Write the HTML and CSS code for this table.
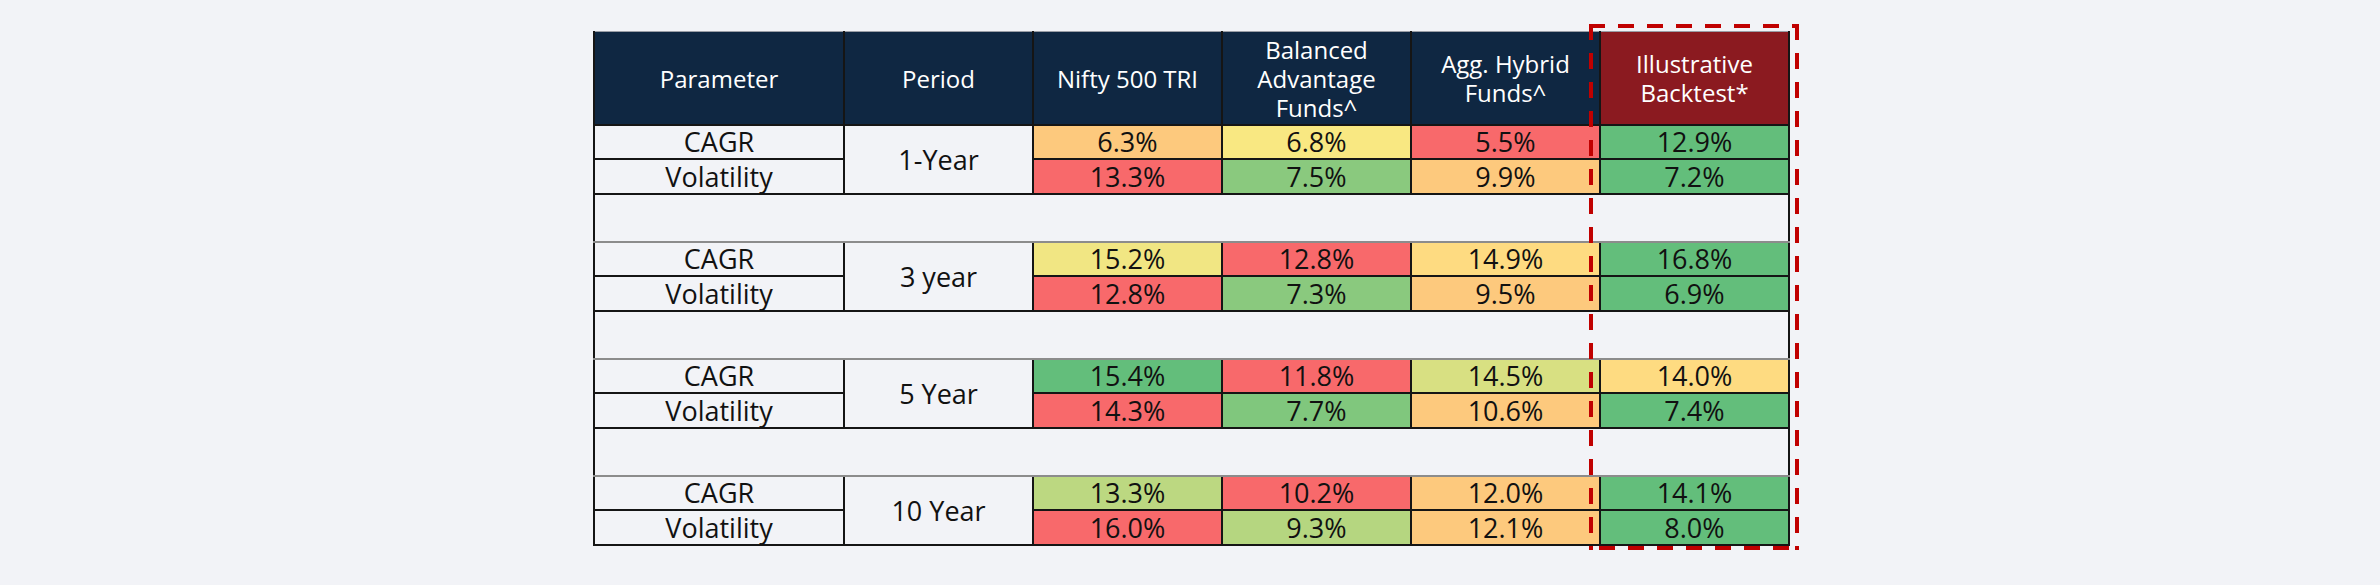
FILE: index.html
```html
<!DOCTYPE html>
<html lang="en">
<head>
<meta charset="utf-8">
<title>Returns comparison</title>
<link rel="stylesheet" href="styles.css">
</head>
<body>
<main class="page">
  <div class="wrap">
    <table class="grid">
      <colgroup>
        <col class="c-param"><col class="c-period"><col class="c-val"><col class="c-val"><col class="c-val"><col class="c-val">
      </colgroup>
      <thead>
        <tr class="head">
          <th>Parameter</th>
          <th>Period</th>
          <th>Nifty 500 TRI</th>
          <th>Balanced<br>Advantage<br>Funds^</th>
          <th>Agg. Hybrid<br>Funds^</th>
          <th class="hl">Illustrative<br>Backtest*</th>
        </tr>
      </thead>
      <tbody>
        <tr class="r1">
          <td>CAGR</td><td rowspan="2">1-Year</td>
          <td class="or">6.3%</td><td class="ye">6.8%</td><td class="rd">5.5%</td><td class="gr">12.9%</td>
        </tr>
        <tr class="r2">
          <td>Volatility</td>
          <td class="rd">13.3%</td><td class="lg">7.5%</td><td class="or">9.9%</td><td class="gr">7.2%</td>
        </tr>
        <tr class="sp"><td colspan="6"></td></tr>
        <tr class="r1">
          <td>CAGR</td><td rowspan="2">3 year</td>
          <td class="ye2">15.2%</td><td class="rd">12.8%</td><td class="ly">14.9%</td><td class="gr">16.8%</td>
        </tr>
        <tr class="r2">
          <td>Volatility</td>
          <td class="rd">12.8%</td><td class="lg">7.3%</td><td class="or">9.5%</td><td class="gr">6.9%</td>
        </tr>
        <tr class="sp"><td colspan="6"></td></tr>
        <tr class="r1">
          <td>CAGR</td><td rowspan="2">5 Year</td>
          <td class="gr">15.4%</td><td class="rd">11.8%</td><td class="yg">14.5%</td><td class="ly">14.0%</td>
        </tr>
        <tr class="r2">
          <td>Volatility</td>
          <td class="rd">14.3%</td><td class="lg2">7.7%</td><td class="or">10.6%</td><td class="gr">7.4%</td>
        </tr>
        <tr class="sp"><td colspan="6"></td></tr>
        <tr class="r1">
          <td>CAGR</td><td rowspan="2">10 Year</td>
          <td class="yg2">13.3%</td><td class="rd">10.2%</td><td class="or">12.0%</td><td class="gr">14.1%</td>
        </tr>
        <tr class="r2">
          <td>Volatility</td>
          <td class="rd">16.0%</td><td class="yg3">9.3%</td><td class="or">12.1%</td><td class="gr">8.0%</td>
        </tr>
      </tbody>
    </table>
    <div class="focus" aria-hidden="true">
      <span class="dash dash-top"></span>
      <span class="dash dash-right"></span>
      <span class="dash dash-bottom"></span>
      <span class="dash dash-left"></span>
    </div>
  </div>
</main>
</body>
</html>
```

FILE: styles.css
```css
html, body {
  margin: 0;
  padding: 0;
  background: #f2f3f7;
}

body {
  min-height: 585px;
}

.page {
  display: flex;
  justify-content: center;
  padding-top: 31px;
  padding-bottom: 30px;
  padding-left: 3px;
}

.wrap {
  position: relative;
}

.grid {
  border-collapse: collapse;
  table-layout: fixed;
  width: 1196px;
  font-family: "Open Sans", "Noto Sans", sans-serif;
  color: #111;
  background: #f2f3f7;
}

.c-param { width: 250px; }
.c-period { width: 189px; }
.c-val { width: 189px; }

.grid th,
.grid td {
  border: 2px solid #151515;
  padding: 0;
  text-align: center;
  vertical-align: middle;
}

.head th {
  height: 92px;
  background: #0f2742;
  color: #ffffff;
  font-weight: 400;
  font-size: 24px;
  line-height: 29px;
  border-top: 1px solid #9a9ea6;
}

.head th.hl {
  background: #8b1a20;
}

.grid td {
  font-size: 27px;
  line-height: 30px;
}

.r1 td { height: 32px; }
.r2 td { height: 33px; }

.sp td {
  height: 46px;
  border-top: 2px solid #8c8c8c;
  border-bottom: 2px solid #8c8c8c;
}

.or { background: #fdc97d; }
.ye { background: #f9e882; }
.ye2 { background: #f1e683; }
.ly { background: #fedb81; }
.rd { background: #f8696b; }
.gr { background: #63be7b; }
.lg { background: #8ac97e; }
.lg2 { background: #80c77d; }
.yg { background: #d8e082; }
.yg2 { background: #bcd881; }
.yg3 { background: #b5d680; }

.focus {
  position: absolute;
  left: 996px;
  top: -7px;
  width: 210px;
  height: 526px;
  pointer-events: none;
}

.dash {
  position: absolute;
  display: block;
}

.dash-top,
.dash-bottom {
  left: 0;
  width: 210px;
  height: 4px;
  background: repeating-linear-gradient(to right, #c00000 0 16px, transparent 16px 29px);
}

.dash-top { top: 0; }
.dash-bottom {
  bottom: 0;
  left: 10px;
  width: 200px;
}

.dash-left,
.dash-right {
  top: 0;
  width: 4px;
  height: 526px;
  background: repeating-linear-gradient(to bottom, #c00000 0 16px, transparent 16px 29px);
}

.dash-left { left: 0; }
.dash-right { right: 0; }
```
